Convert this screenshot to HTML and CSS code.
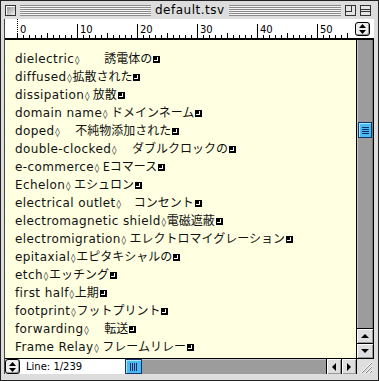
FILE: index.html
```html
<!DOCTYPE html>
<html lang="ja">
<head>
    <meta charset="UTF-8">
    <title>default.tsv</title>
    <link rel="stylesheet" href="styles.css">
</head>
<body>
    <div class="window">
        <div class="titlebar">
            <span class="closebox"></span>
            <span class="stripes left"></span>
            <span class="title">default.tsv</span>
            <span class="stripes right"></span>
            <span class="zoombox"></span>
            <span class="collapsebox"></span>
        </div>
        <div class="content">
            <div class="ruler">
                <div class="ruler-scale">
                    <span class="ruler-mark first">0</span>
                    <span class="ruler-mark">10</span>
                    <span class="ruler-mark">20</span>
                    <span class="ruler-mark">30</span>
                    <span class="ruler-mark">40</span>
                    <span class="ruler-mark">50</span>
                </div>
                <span class="stepper">
                    <svg width="7" height="10" viewBox="0 0 7 10"><path d="M3.5 0 L7 4 H0 Z M0 6 H7 L3.5 10 Z" fill="#000"/></svg>
                </span>
            </div>
            <div class="text">
                <div class="row"><span class="en">dielectric</span><span class="tab"></span><span class="ja">　　誘電体の</span><span class="ret"></span></div>
                <div class="row"><span class="en">diffused</span><span class="tab"></span><span class="ja">拡散された</span><span class="ret"></span></div>
                <div class="row"><span class="en">dissipation</span><span class="tab"></span><span class="ja"> 放散</span><span class="ret"></span></div>
                <div class="row"><span class="en">domain name</span><span class="tab"></span><span class="ja"> ドメインネーム</span><span class="ret"></span></div>
                <div class="row"><span class="en">doped</span><span class="tab"></span><span class="ja">　 不純物添加された</span><span class="ret"></span></div>
                <div class="row"><span class="en">double-clocked</span><span class="tab"></span><span class="ja">　 ダブルクロックの</span><span class="ret"></span></div>
                <div class="row"><span class="en">e-commerce</span><span class="tab"></span><span class="ja"> Eコマース</span><span class="ret"></span></div>
                <div class="row"><span class="en">Echelon</span><span class="tab"></span><span class="ja"> エシュロン</span><span class="ret"></span></div>
                <div class="row"><span class="en">electrical outlet</span><span class="tab"></span><span class="ja">　コンセント</span><span class="ret"></span></div>
                <div class="row"><span class="en">electromagnetic shield</span><span class="tab"></span><span class="ja">電磁遮蔽</span><span class="ret"></span></div>
                <div class="row"><span class="en">electromigration</span><span class="tab"></span><span class="ja"> エレクトロマイグレーション</span><span class="ret"></span></div>
                <div class="row"><span class="en">epitaxial</span><span class="tab"></span><span class="ja">エピタキシャルの</span><span class="ret"></span></div>
                <div class="row"><span class="en">etch</span><span class="tab"></span><span class="ja">エッチング</span><span class="ret"></span></div>
                <div class="row"><span class="en">first half</span><span class="tab"></span><span class="ja">上期</span><span class="ret"></span></div>
                <div class="row"><span class="en">footprint</span><span class="tab"></span><span class="ja">フットプリント</span><span class="ret"></span></div>
                <div class="row"><span class="en">forwarding</span><span class="tab"></span><span class="ja">　 転送</span><span class="ret"></span></div>
                <div class="row"><span class="en">Frame Relay</span><span class="tab"></span><span class="ja"> フレームリレー</span><span class="ret"></span></div>
            </div>
            <div class="vscroll">
                <div class="vtrack"><span class="vthumb"></span></div>
                <span class="arrow up"></span>
                <span class="arrow down"></span>
            </div>
            <div class="statusbar">
                <span class="stepper small">
                    <svg width="7" height="10" viewBox="0 0 7 10"><path d="M3.5 0 L7 4 H0 Z M0 6 H7 L3.5 10 Z" fill="#000"/></svg>
                </span>
                <span class="linefield">Line: 1/239</span>
                <span class="hthumb"></span>
                <span class="htrack"></span>
                <span class="arrow left"></span>
                <span class="arrow right"></span>
                <span class="growbox">
                    <svg width="16" height="14" viewBox="0 0 16 14">
                        <path d="M4 13 L15 2 M8 13 L15 6 M12 13 L15 10" stroke="#fff" stroke-width="1"/>
                        <path d="M5 13 L15 3 M9 13 L15 7 M13 13 L15 11" stroke="#888" stroke-width="1"/>
                    </svg>
                </span>
            </div>
        </div>
    </div>
</body>
</html>
```

FILE: styles.css
```css
body {
    margin: 0;
    font-family: "DejaVu Sans", "Noto Sans CJK JP", sans-serif;
}
.window {
    width: 379px;
    height: 381px;
    box-sizing: border-box;
    border: 1px solid #222;
    background: #dddddd;
    padding: 0 4px 6px 3px;
    display: flex;
    flex-direction: column;
}

/* title bar */
.titlebar {
    height: 18px;
    flex-shrink: 0;
    display: flex;
    align-items: center;
    gap: 4px;
    padding: 0 6px 0 1px;
}
.closebox, .zoombox, .collapsebox {
    width: 11px;
    height: 11px;
    box-sizing: border-box;
    border: 1px solid #333;
    flex-shrink: 0;
}
.closebox {
    background: linear-gradient(135deg, #888, #f2f2f2);
    box-shadow: inset 1px 1px #fff;
}
.zoombox {
    background:
        linear-gradient(#333, #333) 0 5px / 6px 1px no-repeat,
        linear-gradient(#333, #333) 5px 0 / 1px 6px no-repeat,
        #e4e4e4;
}
.collapsebox {
    background:
        linear-gradient(#333, #333) 0 3px / 100% 1px no-repeat,
        linear-gradient(#333, #333) 0 5px / 100% 1px no-repeat,
        #e4e4e4;
}
.stripes {
    height: 11px;
    background: repeating-linear-gradient(to bottom, #8a8a8a 0 1px, #f6f6f6 1px 2px);
}
.stripes.left {
    flex: 0 0 131px;
}
.stripes.right {
    flex: 0 0 112px;
}
.title {
    flex: 1;
    text-align: center;
    font-size: 12px;
    letter-spacing: 0.5px;
    line-height: 18px;
}

/* main area */
.content {
    flex: 1;
    min-height: 0;
    display: grid;
    grid-template-columns: 1fr 18px;
    grid-template-rows: 21px minmax(0, 1fr) 16px;
    border-left: 1px solid #444;
}
.ruler {
    grid-column: 1 / 3;
    background: #fff;
    border-bottom: 2px solid #000;
    display: flex;
    padding-left: 12px;
}
.ruler-scale {
    flex: 1;
    display: flex;
    align-items: flex-end;
    overflow: hidden;
    background:
        repeating-linear-gradient(to right, #000 0 1px, transparent 1px 6px) left bottom / 100% 3px no-repeat,
        repeating-linear-gradient(to right, #000 0 1px, transparent 1px 30px) left bottom / 100% 5px no-repeat;
}
.ruler-mark {
    flex: 0 0 60px;
    box-sizing: border-box;
    height: 14px;
    border-left: 1px solid #000;
    padding: 1px 0 0 2px;
    font-size: 10px;
    line-height: 9px;
}
.ruler-mark.first {
    height: 19px;
    padding-top: 6px;
    border-left: 1px dotted #000;
}
.stepper {
    align-self: center;
    width: 15px;
    height: 14px;
    box-sizing: border-box;
    margin: 0 4px 0 3px;
    border: 1px solid #000;
    border-radius: 3px;
    background: #eee;
    box-shadow: inset -1px -1px #999;
    display: flex;
    align-items: center;
    justify-content: center;
}

/* text */
.text {
    background: #ffffe2;
    padding: 9px 0 0 10px;
    overflow: hidden;
    font-size: 12px;
    color: #111;
}
.row {
    height: 18px;
    line-height: 18px;
    white-space: pre;
}
.en {
    letter-spacing: 0.4px;
}
.ja {
    font-family: "Noto Sans CJK JP", sans-serif;
}
.tab {
    display: inline-block;
    width: 6px;
    text-align: center;
}
.tab::before {
    content: "\25CA";
    font-size: 9px;
    color: #000;
}
.ret {
    display: inline-block;
    width: 7px;
    height: 7px;
    margin-left: 1px;
    background:
        linear-gradient(#fff, #fff) 1px 4px / 4px 1px no-repeat,
        linear-gradient(#fff, #fff) 4px 1px / 1px 4px no-repeat,
        #000;
}

/* scroll bars */
.vscroll {
    display: flex;
    flex-direction: column;
    border-left: 1px solid #000;
    border-right: 1px solid #000;
}
.vtrack {
    flex: 1;
    background: #9c9c9c;
    box-shadow: inset 1px 0 #c6c6c6, inset -1px 0 #777;
}
.vthumb, .hthumb {
    display: block;
    box-sizing: border-box;
    border: 1px solid #16326e;
    box-shadow: inset 1px 1px #a8e6ff;
}
.vthumb {
    margin: 82px 0 0 1px;
    width: 14px;
    height: 16px;
    background:
        repeating-linear-gradient(to bottom, #0c2a66 0 1px, transparent 1px 2px) 3px 4px / 7px 7px no-repeat,
        #45bdf2;
}
.arrow {
    height: 15px;
    flex-shrink: 0;
    box-sizing: border-box;
    border-top: 1px solid #000;
    background: #dedede;
    box-shadow: inset 1px 1px #fff, inset -1px -1px #999;
    display: flex;
    align-items: center;
    justify-content: center;
}
.arrow::before {
    content: "";
    border: 4px solid transparent;
}
.arrow.up::before {
    border-top: 0;
    border-bottom-color: #000;
}
.arrow.down::before {
    border-bottom: 0;
    border-top-color: #000;
}
.statusbar {
    grid-column: 1 / 3;
    display: flex;
    border-top: 1px solid #000;
}
.stepper.small {
    align-self: stretch;
    height: auto;
    margin: 0;
    flex: 0 0 15px;
}
.linefield {
    flex: 0 0 105px;
    box-sizing: border-box;
    background: #fff;
    font-size: 10px;
    line-height: 15px;
    padding-left: 6px;
}
.hthumb {
    flex: 0 0 17px;
    background:
        repeating-linear-gradient(to right, #0c2a66 0 1px, transparent 1px 2px) 4px 3px / 7px 8px no-repeat,
        #45bdf2;
}
.htrack {
    flex: 1;
    background: #9c9c9c;
    box-shadow: inset 0 1px #c6c6c6;
}
.arrow.left, .arrow.right {
    flex: 0 0 15px;
    height: auto;
    border-top: 0;
    border-left: 1px solid #000;
}
.arrow.left::before {
    border-left: 0;
    border-right-color: #000;
}
.arrow.right::before {
    border-right: 0;
    border-left-color: #000;
}
.growbox {
    flex: 0 0 17px;
    border-left: 1px solid #000;
    background: #dedede;
    display: flex;
    align-items: flex-end;
}
```
